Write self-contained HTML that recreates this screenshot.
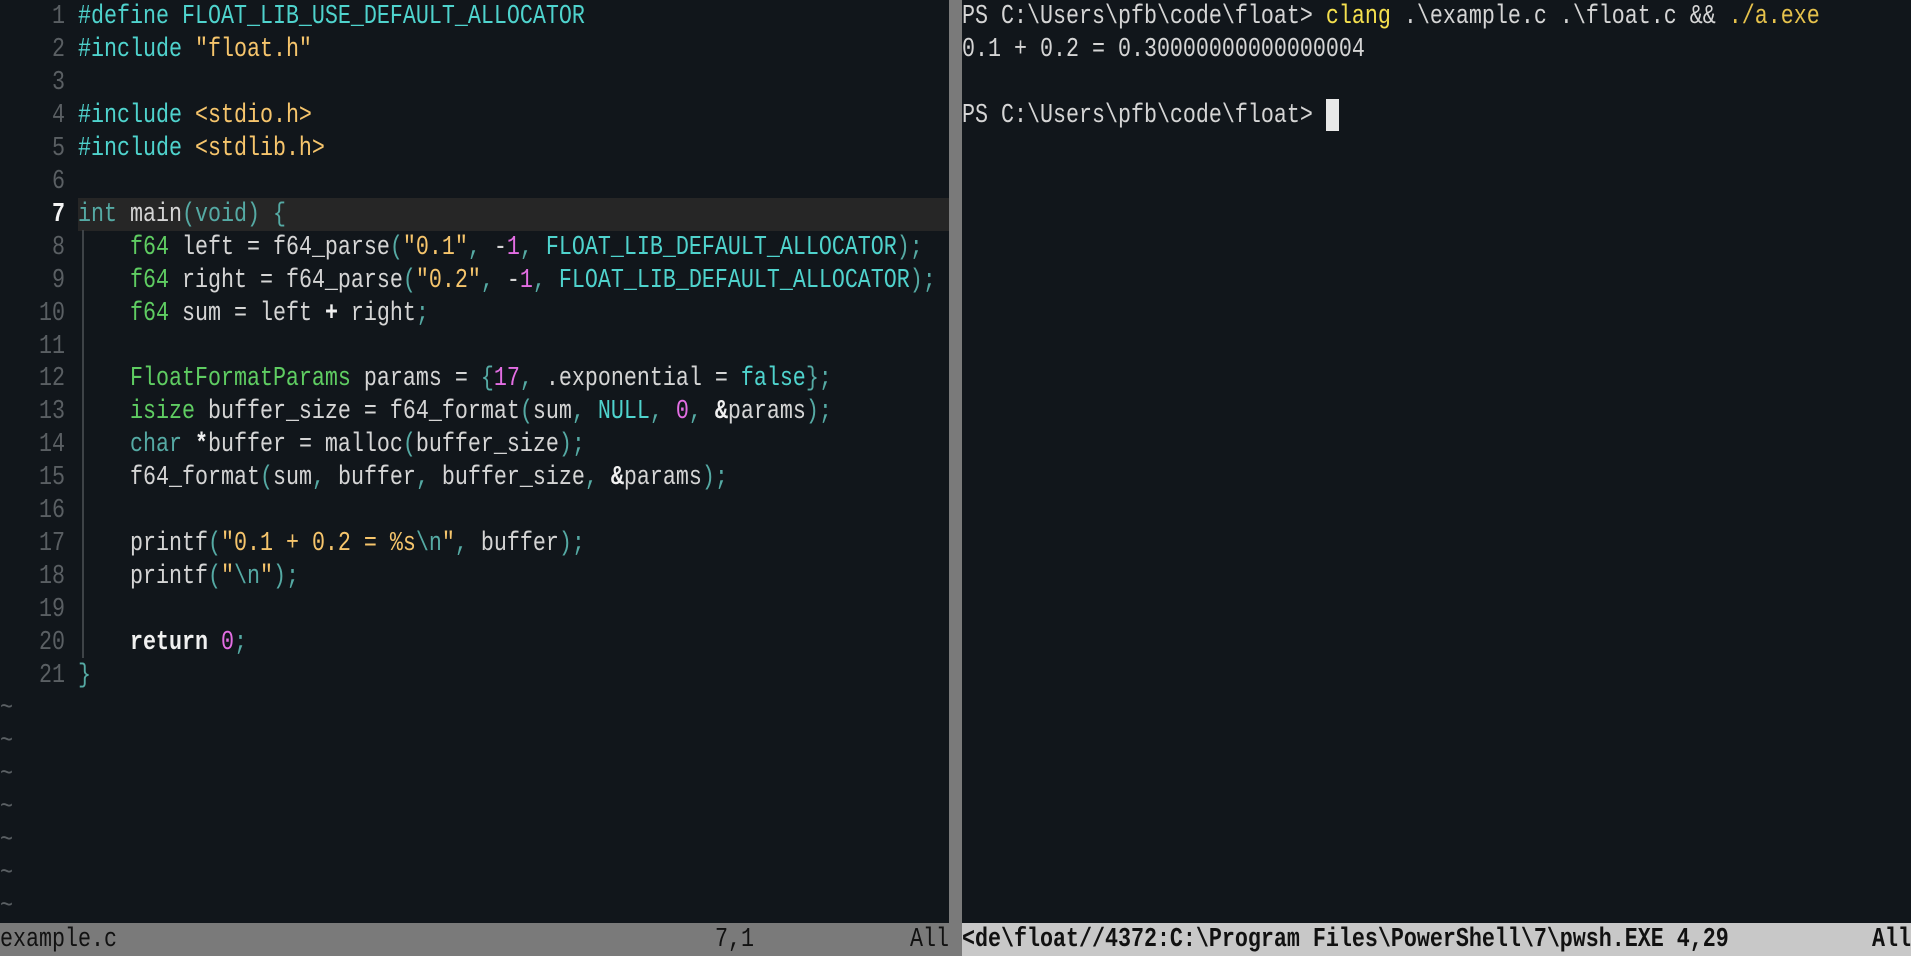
<!DOCTYPE html>
<html><head><meta charset="utf-8">
<style>
html,body{margin:0;padding:0;background:#11161b;width:1911px;height:956px;overflow:hidden}
body{position:relative;font-family:"Liberation Mono",monospace;font-size:21.67px;color:#d5d5d5}
.r{position:absolute;height:33px;line-height:33px;white-space:pre}
.s{display:inline-block;transform:scaleY(1.24);transform-origin:50% 55%}
.ln{position:absolute;left:0;width:65px;text-align:right;color:#5a5f63;height:33px;line-height:33px}
.code{left:78px}
.cy{color:#4fd3cd}.te{color:#55aaa4}.gr{color:#5fcd62}.ye{color:#f6c56c}.mg{color:#e46ee4}.b{font-weight:bold;color:#f0f0f0}
.tl{color:#5a5f63;left:0}
#guide{position:absolute;left:82px;width:2px;background:#3e4347;top:230px;height:428px}
#cl{position:absolute;left:78px;width:871px;top:197.7px;height:32.95px;background:#262626}
#div{position:absolute;left:949px;width:13px;top:0;height:956px;background:#7a7a7a}
#sl{position:absolute;left:0;top:923px;width:949px;height:33px;background:#7a7a7a;color:#111}
#sr{position:absolute;left:962px;top:923px;width:949px;height:33px;background:#c8c8c8;color:#111;font-weight:bold}
.term{left:962px}
.cur{position:absolute;left:1326px;top:99px;width:13px;height:32px;background:#e8e8e8}
</style></head><body>
<div id="cl"></div>
<div id="guide"></div>
<div id="div"></div>

<div class="ln" style="top:0px"><span class="s">1</span></div>
<div class="ln" style="top:32.95px"><span class="s">2</span></div>
<div class="ln" style="top:65.9px"><span class="s">3</span></div>
<div class="ln" style="top:98.85px"><span class="s">4</span></div>
<div class="ln" style="top:131.8px"><span class="s">5</span></div>
<div class="ln" style="top:164.75px"><span class="s">6</span></div>
<div class="ln" style="top:197.7px;color:#f4f4f4;font-weight:bold"><span class="s">7</span></div>
<div class="ln" style="top:230.65px"><span class="s">8</span></div>
<div class="ln" style="top:263.6px"><span class="s">9</span></div>
<div class="ln" style="top:296.55px"><span class="s">10</span></div>
<div class="ln" style="top:329.5px"><span class="s">11</span></div>
<div class="ln" style="top:362.45px"><span class="s">12</span></div>
<div class="ln" style="top:395.4px"><span class="s">13</span></div>
<div class="ln" style="top:428.35px"><span class="s">14</span></div>
<div class="ln" style="top:461.3px"><span class="s">15</span></div>
<div class="ln" style="top:494.25px"><span class="s">16</span></div>
<div class="ln" style="top:527.2px"><span class="s">17</span></div>
<div class="ln" style="top:560.15px"><span class="s">18</span></div>
<div class="ln" style="top:593.1px"><span class="s">19</span></div>
<div class="ln" style="top:626.05px"><span class="s">20</span></div>
<div class="ln" style="top:659px"><span class="s">21</span></div>

<div class="r code" style="top:0px"><span class="s"><span class="cy">#define FLOAT_LIB_USE_DEFAULT_ALLOCATOR</span></span></div>
<div class="r code" style="top:32.95px"><span class="s"><span class="cy">#include</span> <span class="ye">"float.h"</span></span></div>
<div class="r code" style="top:98.85px"><span class="s"><span class="cy">#include</span> <span class="ye">&lt;stdio.h&gt;</span></span></div>
<div class="r code" style="top:131.8px"><span class="s"><span class="cy">#include</span> <span class="ye">&lt;stdlib.h&gt;</span></span></div>
<div class="r code" style="top:197.7px"><span class="s"><span class="te">int</span> main<span class="te">(void)</span> <span class="te">{</span></span></div>
<div class="r code" style="top:230.65px"><span class="s">    <span class="gr">f64</span> left = f64_parse<span class="te">(</span><span class="ye">"0.1"</span><span class="te">,</span> -<span class="mg">1</span><span class="te">,</span> <span class="cy">FLOAT_LIB_DEFAULT_ALLOCATOR</span><span class="te">);</span></span></div>
<div class="r code" style="top:263.6px"><span class="s">    <span class="gr">f64</span> right = f64_parse<span class="te">(</span><span class="ye">"0.2"</span><span class="te">,</span> -<span class="mg">1</span><span class="te">,</span> <span class="cy">FLOAT_LIB_DEFAULT_ALLOCATOR</span><span class="te">);</span></span></div>
<div class="r code" style="top:296.55px"><span class="s">    <span class="gr">f64</span> sum = left <span class="b">+</span> right<span class="te">;</span></span></div>
<div class="r code" style="top:362.45px"><span class="s">    <span class="gr">FloatFormatParams</span> params = <span class="te">{</span><span class="mg">17</span><span class="te">,</span> .exponential = <span class="cy">false</span><span class="te">};</span></span></div>
<div class="r code" style="top:395.4px"><span class="s">    <span class="gr">isize</span> buffer_size = f64_format<span class="te">(</span>sum<span class="te">,</span> <span class="cy">NULL</span><span class="te">,</span> <span class="mg">0</span><span class="te">,</span> <span class="b">&amp;</span>params<span class="te">);</span></span></div>
<div class="r code" style="top:428.35px"><span class="s">    <span class="te">char</span> <span class="b">*</span>buffer = malloc<span class="te">(</span>buffer_size<span class="te">);</span></span></div>
<div class="r code" style="top:461.3px"><span class="s">    f64_format<span class="te">(</span>sum<span class="te">,</span> buffer<span class="te">,</span> buffer_size<span class="te">,</span> <span class="b">&amp;</span>params<span class="te">);</span></span></div>
<div class="r code" style="top:527.2px"><span class="s">    printf<span class="te">(</span><span class="ye">"0.1 + 0.2 = %s</span><span class="te">\n</span><span class="ye">"</span><span class="te">,</span> buffer<span class="te">);</span></span></div>
<div class="r code" style="top:560.15px"><span class="s">    printf<span class="te">(</span><span class="ye">"</span><span class="te">\n</span><span class="ye">"</span><span class="te">);</span></span></div>
<div class="r code" style="top:626.05px"><span class="s">    <span class="b">return</span> <span class="mg">0</span><span class="te">;</span></span></div>
<div class="r code" style="top:659px"><span class="s"><span class="te">}</span></span></div>

<div class="r tl" style="top:691.95px"><span class="s">~</span></div>
<div class="r tl" style="top:724.9px"><span class="s">~</span></div>
<div class="r tl" style="top:757.85px"><span class="s">~</span></div>
<div class="r tl" style="top:790.8px"><span class="s">~</span></div>
<div class="r tl" style="top:823.75px"><span class="s">~</span></div>
<div class="r tl" style="top:856.7px"><span class="s">~</span></div>
<div class="r tl" style="top:889.65px"><span class="s">~</span></div>

<div class="r term" style="top:0px"><span class="s">PS C:\Users\pfb\code\float&gt; <span style="color:#f5e04e">clang</span> .\example.c .\float.c &amp;&amp; <span style="color:#e6c24c">./a.exe</span></span></div>
<div class="r term" style="top:32.95px"><span class="s">0.1 + 0.2 = 0.30000000000000004</span></div>
<div class="r term" style="top:98.85px"><span class="s">PS C:\Users\pfb\code\float&gt; </span></div>
<div class="cur"></div>

<div id="sl"><div class="r" style="left:0;top:0"><span class="s">example.c</span></div><div class="r" style="left:715px;top:0"><span class="s">7,1</span></div><div class="r" style="left:910px;top:0"><span class="s">All</span></div></div>
<div id="sr"><div class="r" style="left:0;top:0"><span class="s">&lt;de\float//4372:C:\Program Files\PowerShell\7\pwsh.EXE 4,29</span></div><div class="r" style="left:910px;top:0"><span class="s">All</span></div></div>
</body></html>
